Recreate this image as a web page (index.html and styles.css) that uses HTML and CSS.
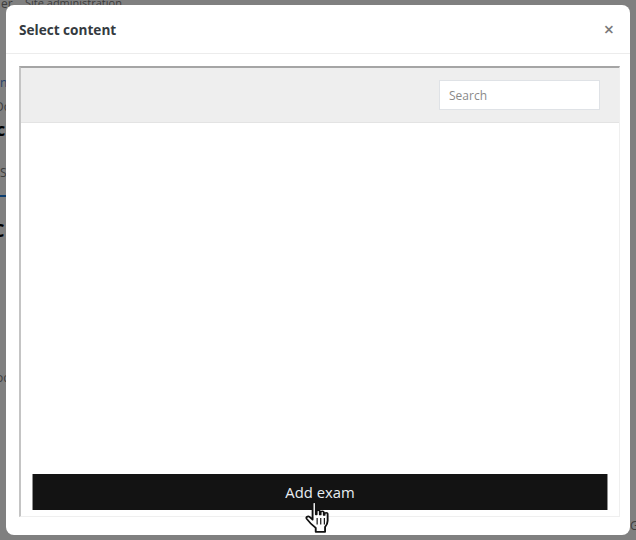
FILE: index.html
```html
<!DOCTYPE html>
<html lang="en">
<head>
    <meta charset="UTF-8">
    <meta name="viewport" content="width=device-width, initial-scale=1.0">
    <title>Select content</title>
    <link rel="stylesheet" href="styles.css">
</head>
<body>

    <!-- Page behind the dialog, only slivers of it show -->
    <div class="backdrop">
        <span class="peek peek-nav">er</span>
        <span class="peek peek-admin">Site administration</span>
        <span class="peek peek-link">n</span>
        <span class="peek peek-do">Do</span>
        <span class="peek peek-bold">c</span>
        <span class="peek peek-s">S</span>
        <span class="peek peek-tab"></span>
        <span class="peek peek-head">C</span>
        <span class="peek peek-oc">oc</span>
        <span class="peek peek-right">G</span>
    </div>

    <div class="modal">
        <div class="modal-header">
            <h2>Select content</h2>
            <button class="close">&times;</button>
        </div>

        <div class="modal-body">
            <div class="frame">
                <div class="toolbar">
                    <input type="text" class="search" placeholder="Search">
                </div>
                <div class="results"></div>
                <button class="add-button">Add exam</button>
            </div>
        </div>
    </div>

    <!-- Mouse pointer over the button -->
    <svg class="pointer" width="28" height="34" viewBox="0 0 24 32" preserveAspectRatio="none">
        <path d="M6.500 2.200c0-1.500 2.800-1.500 2.800 0v10.300h.7V9.600c0-1.400 2.700-1.400 2.700 0v3h.7v-1.900c0-1.400 2.700-1.400 2.700 0v2.400h.7v-1c0-1.400 2.600-1.400 2.600 0v6.400c0 2.600-1 4.300-2.200 6v4.500H9.200v-3.600C6.500 23 3.800 20.300 1.500 16.800c-1-1.600 1-3.100 2.400-1.800l2.600 2.500z" fill="#fff" stroke="#111" stroke-width="1.600" stroke-linejoin="round"/>
        <path d="M10.400 16v6M13.500 16v6M16.600 16v6" stroke="#111" stroke-width="1"/>
    </svg>

</body>
</html>
```

FILE: styles.css
```css
html, body {
    height: 100%;
}
body {
    margin: 0;
    height: 540px;
    overflow: hidden;
    background-color: #808080;
    font-family: "Open Sans", "Noto Sans", sans-serif;
    padding: 5px 6px;
    box-sizing: border-box;
    position: relative;
}
.backdrop {
    position: absolute;
    inset: 0;
    font-size: 12px;
    color: #3d3d3d;
}
.peek {
    position: absolute;
    line-height: 14px;
}
.peek-nav { left: 1px; top: -3px; }
.peek-admin { left: 25px; top: -4px; font-size: 11px; }
.peek-link { left: 0; top: 76px; color: #24406a; }
.peek-do { left: -5px; top: 100px; }
.peek-bold { left: -4px; top: 122px; font-weight: 700; font-size: 18px; color: #000; }
.peek-s { left: 0; top: 166px; }
.peek-tab { left: 0; top: 195px; width: 6px; height: 2px; background-color: #0d3f70; }
.peek-head { left: -7px; top: 223px; font-weight: 700; font-size: 18px; color: #000; }
.peek-oc { left: -4px; top: 371px; }
.peek-right { left: 630px; top: 519px; }

.modal {
    position: relative;
    width: 624px;
    height: 530px;
    background-color: white;
    border-radius: 8px;
    display: flex;
    flex-direction: column;
}
.modal-header {
    height: 48px;
    flex-shrink: 0;
    border-bottom: 1px solid #ececec;
    display: flex;
    justify-content: space-between;
    align-items: center;
    padding: 0 16px 0 13px;
}
.modal-header h2 {
    margin: 0;
    font-size: 13.600px;
    font-weight: 700;
    color: #343a40;
}
.close {
    border: none;
    background: none;
    padding: 0;
    font-family: "Open Sans", sans-serif;
    font-size: 18px;
    font-weight: 600;
    line-height: 1;
    color: #7a7a7a;
}
.modal-body {
    flex: 1;
    padding: 12px 10px 18px 13px;
    display: flex;
}
.frame {
    flex: 1;
    display: flex;
    flex-direction: column;
    border-top: 2px solid #a5a5a5;
    border-left: 2px solid #c4c4c4;
    border-right: 1px solid #efefef;
    border-bottom: 1px solid #efefef;
    padding-bottom: 6px;
}
.toolbar {
    height: 55px;
    flex-shrink: 0;
    background-color: #eeeeee;
    border-bottom: 1px solid #e3e3e3;
    display: flex;
    justify-content: flex-end;
    align-items: flex-start;
    padding: 12px 19px 0 0;
    box-sizing: border-box;
}
.search {
    width: 161px;
    height: 30px;
    box-sizing: border-box;
    border: 1px solid #dfe2e6;
    background-color: white;
    padding: 0 9px;
    font-family: "Open Sans", sans-serif;
    font-size: 12px;
}
.search::placeholder {
    color: #8a8a8a;
    opacity: 1;
}
.results {
    flex: 1;
}
.add-button {
    flex-shrink: 0;
    height: 36px;
    margin: 0 11px 0 11px;
    background-color: #131313;
    border: 1px solid #8f8f8f;
    border-width: 0 1px;
    color: #e8edf2;
    font-family: "Open Sans", sans-serif;
    font-size: 14.800px;
    padding: 0;
}
.pointer {
    position: absolute;
    left: 305px;
    top: 501px;
}
```
